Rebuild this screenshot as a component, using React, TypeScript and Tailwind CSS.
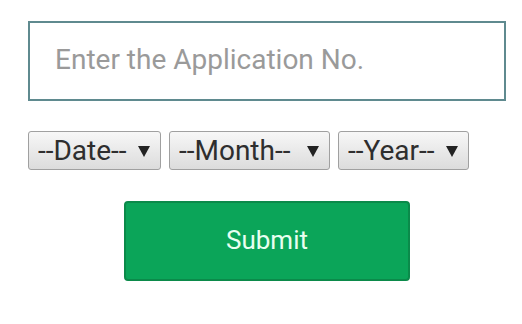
import React from "react";

const selects = [
  { label: "--Date--", w: "w-[133px]" },
  { label: "--Month--", w: "w-[161px]" },
  { label: "--Year--", w: "w-[131px]" },
];

export default function App() {
  return (
    <div className="w-[522px] h-[324px] bg-white font-['Roboto',sans-serif]">
      <div className="pt-[21px] pl-[28px]">
        <input
          type="text"
          placeholder="Enter the Application No."
          className="block w-[478px] h-[80px] border-2 border-[#5f8a8f] bg-white pl-[25px] pb-[3px] text-[28px] text-[#333] placeholder:text-[#9a9a9a] outline-none"
        />
        <div className="flex mt-[30px] gap-[8px]">
          {selects.map((s) => (
            <div key={s.label} className={`relative ${s.w} h-[39px]`}>
              <select className="w-full h-full appearance-none rounded-[3px] border border-[#a0a0a0] bg-gradient-to-b from-[#f7f7f7] to-[#dcdcdc] pl-[9px] text-[28px] leading-none text-[#2e2e2e] outline-none">
                <option>{s.label}</option>
              </select>
              <svg
                className="pointer-events-none absolute right-[11px] top-[15px]"
                width="12"
                height="11"
                viewBox="0 0 12 11"
              >
                <path d="M0 0H12L6 11Z" fill="#222" />
              </svg>
            </div>
          ))}
        </div>
        <div className="mt-[31px] ml-[96px]">
          <button className="w-[286px] h-[80px] rounded-[4px] border-2 border-[#0b8a4a] bg-[#0ba559] text-[26px] text-[#e8fff0] pb-[2px]">
            Submit
          </button>
        </div>
      </div>
    </div>
  );
}
